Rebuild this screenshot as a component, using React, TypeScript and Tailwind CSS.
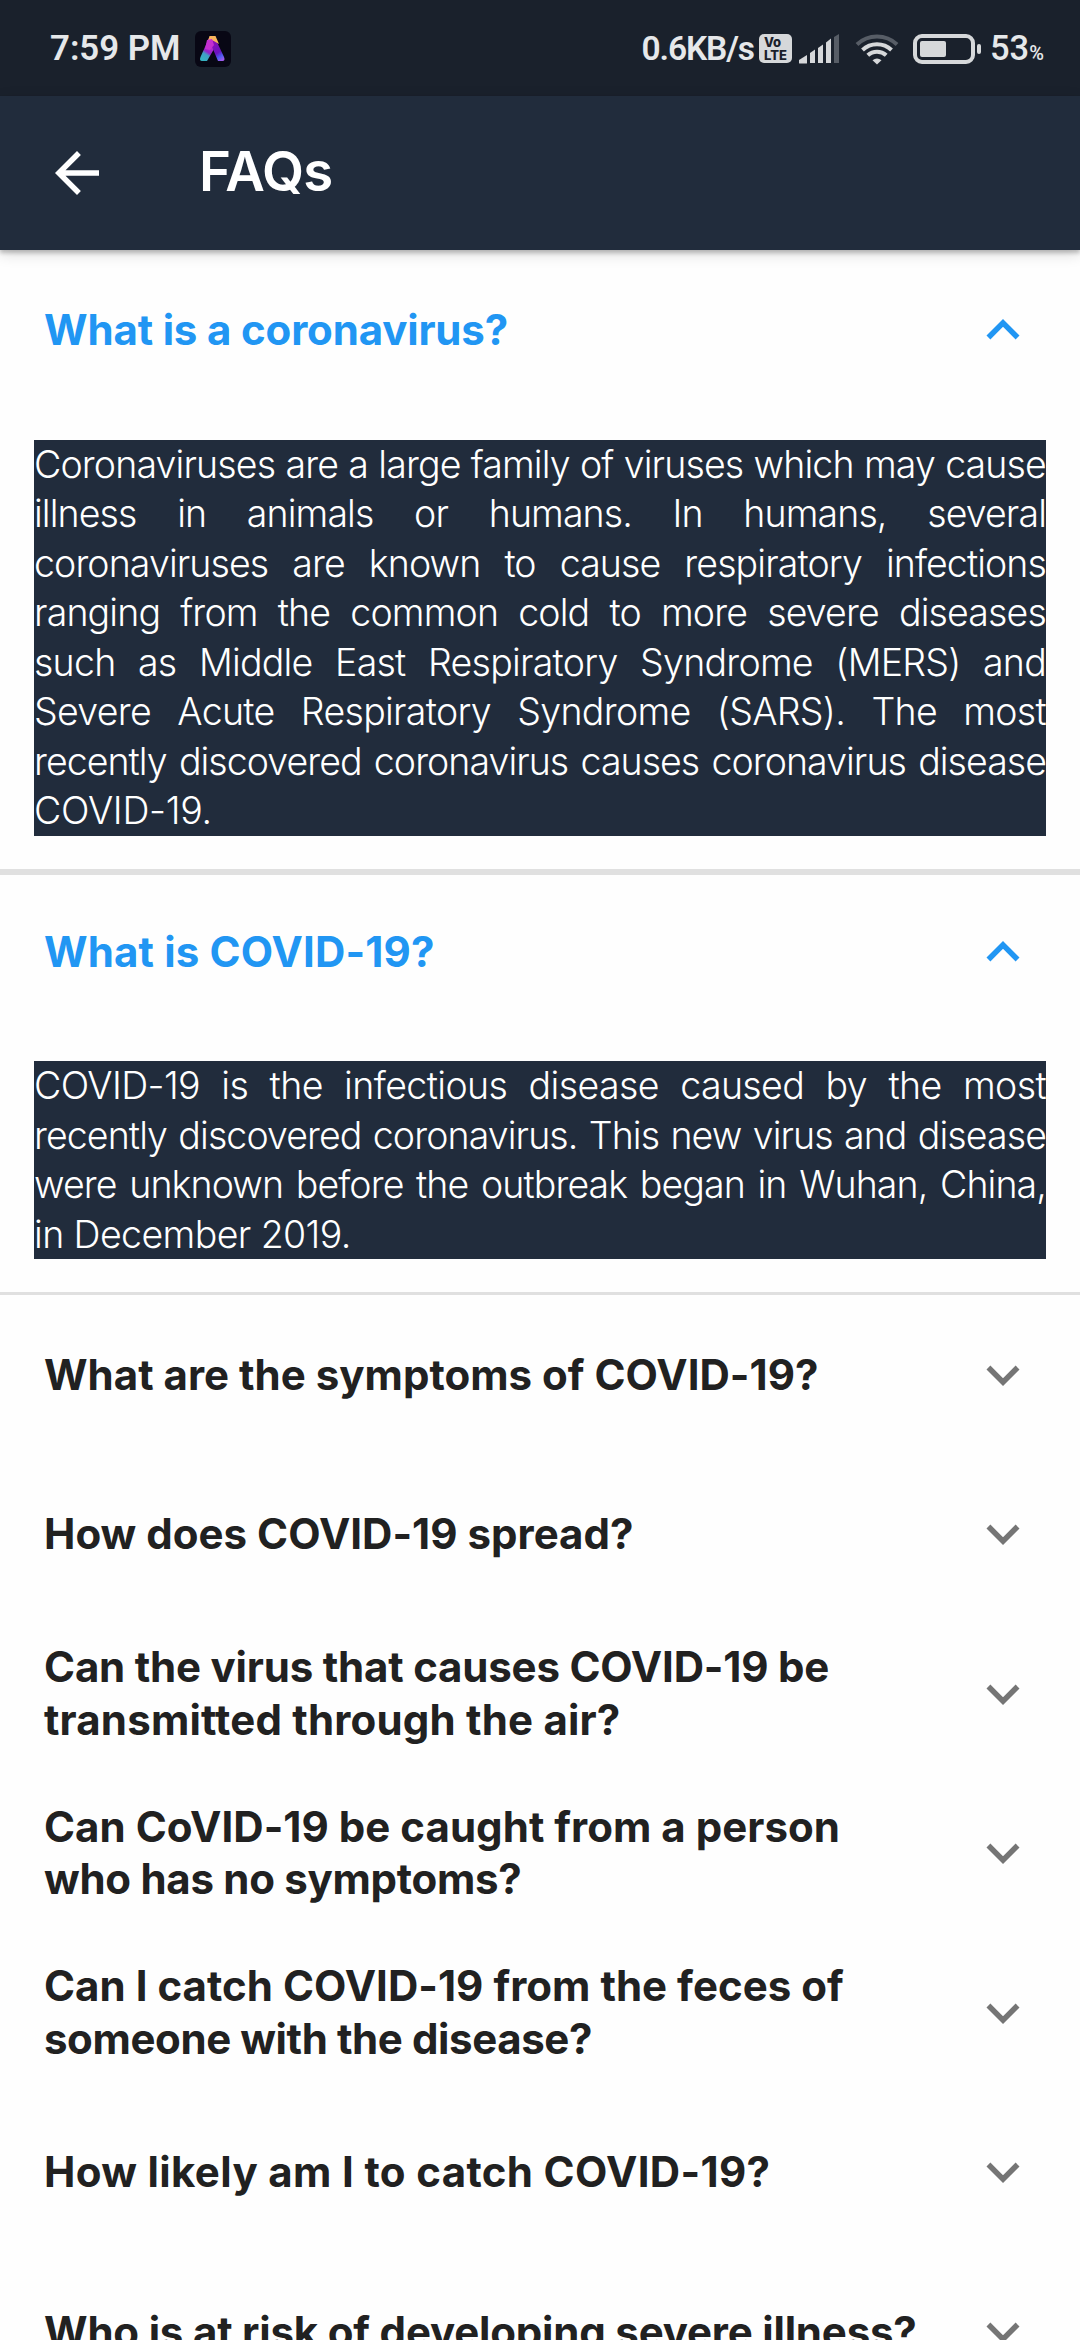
type Line = { text: string; tracking: string };

type Faq = { title: Line[]; body?: Line[] };

const faqs: Faq[] = [
  {
    title: [{ text: "What is a coronavirus?", tracking: "tracking-[-0.16px]" }],
    body: [
      { text: "Coronaviruses are a large family of viruses which may cause", tracking: "tracking-[-0.85px]" },
      { text: "illness in animals or humans. In humans, several", tracking: "tracking-[-0.9px]" },
      { text: "coronaviruses are known to cause respiratory infections", tracking: "tracking-[-0.9px]" },
      { text: "ranging from the common cold to more severe diseases", tracking: "tracking-[-0.85px]" },
      { text: "such as Middle East Respiratory Syndrome (MERS) and", tracking: "tracking-[-0.75px]" },
      { text: "Severe Acute Respiratory Syndrome (SARS). The most", tracking: "tracking-[-0.7px]" },
      { text: "recently discovered coronavirus causes coronavirus disease", tracking: "tracking-[-0.95px]" },
      { text: "COVID-19.", tracking: "tracking-[-0.3px]" },
    ],
  },
  {
    title: [{ text: "What is COVID-19?", tracking: "tracking-[0.15px]" }],
    body: [
      { text: "COVID-19 is the infectious disease caused by the most", tracking: "tracking-[-0.6px]" },
      { text: "recently discovered coronavirus. This new virus and disease", tracking: "tracking-[-0.9px]" },
      { text: "were unknown before the outbreak began in Wuhan, China,", tracking: "tracking-[-0.9px]" },
      { text: "in December 2019.", tracking: "tracking-[-0.6px]" },
    ],
  },
  { title: [{ text: "What are the symptoms of COVID-19?", tracking: "tracking-[0.02px]" }] },
  { title: [{ text: "How does COVID-19 spread?", tracking: "tracking-[0.02px]" }] },
  {
    title: [
      { text: "Can the virus that causes COVID-19 be", tracking: "tracking-[-0.19px]" },
      { text: "transmitted through the air?", tracking: "tracking-[0.19px]" },
    ],
  },
  {
    title: [
      { text: "Can CoVID-19 be caught from a person", tracking: "tracking-[0.04px]" },
      { text: "who has no symptoms?", tracking: "tracking-[-0.28px]" },
    ],
  },
  {
    title: [
      { text: "Can I catch COVID-19 from the feces of", tracking: "tracking-[0.03px]" },
      { text: "someone with the disease?", tracking: "tracking-[-0.4px]" },
    ],
  },
  { title: [{ text: "How likely am I to catch COVID-19?", tracking: "tracking-[0.35px]" }] },
  { title: [{ text: "Who is at risk of developing severe illness?", tracking: "tracking-[-0.19px]" }] },
];

function AppBadge() {
  return (
    <svg className="ml-4 size-9" viewBox="0 0 36 36">
      <defs>
        <linearGradient id="leftLeg" x1="0.7" y1="0" x2="0.2" y2="1">
          <stop offset="0.1" stopColor="#d63bd0" />
          <stop offset="0.6" stopColor="#9222c8" />
          <stop offset="0.72" stopColor="#3e9fc4" />
          <stop offset="1" stopColor="#35b3c0" />
        </linearGradient>
        <linearGradient id="rightLeg" x1="0.3" y1="0" x2="0.8" y2="1">
          <stop offset="0.1" stopColor="#8a10b8" />
          <stop offset="0.6" stopColor="#6b12c0" />
          <stop offset="0.8" stopColor="#4d5cf0" />
          <stop offset="1" stopColor="#a35cf0" />
        </linearGradient>
      </defs>
      <rect width="36" height="36" rx="6" fill="#080714" />
      <path d="M14 7h6l3 9-4 2L12 30H7q-3 0-1.500-4z" fill="url(#leftLeg)" />
      <path d="M13.500 9l8 1L29 26q1.500 4-1.500 4H23L17.500 17z" fill="url(#rightLeg)" />
      <path d="M14.500 5h6l3.500 8-7-4-4 1z" fill="#f8b45c" />
      <path d="M12 9l5-1 2 6-4 5-5-1z" fill="#c42fd0" />
    </svg>
  );
}

function VolteIcon() {
  return (
    <span className="ml-[5px] flex h-[29px] w-[33px] flex-col items-center justify-center rounded-[5px] bg-[#d6d8da] font-[Inter] text-[13px] leading-[12.5px] font-extrabold text-[#1a202b]">
      <span className="-ml-1.5">Vo</span>
      <span>LTE</span>
    </span>
  );
}

function SignalIcon() {
  return (
    <svg className="ml-[7px] h-[30px] w-[41px]" viewBox="0 0 41 30" fill="#d6d8da">
      <path d="M0 29v-3l8-5v8q0 .5-.5.500H1Q0 29.500 0 29z" />
      <path d="M11 19l5-3.500v13.500h-5z" />
      <path d="M19 14l5-3.500v18.500h-5z" />
      <path d="M27 8.500l5-4v24.500h-5z" />
      <path d="M35 3l5-3v29h-5z" fill="#575d66" />
    </svg>
  );
}

function WifiIcon() {
  return (
    <svg className="ml-[15px] h-[32px] w-[44px]" viewBox="0 0 44 32" fill="none" strokeWidth="4">
      <path d="M2 11.500a29 29 0 0 1 40 0" stroke="#575d66" />
      <path d="M7.500 17a21 21 0 0 1 29 0" stroke="#d6d8da" />
      <path d="M12.800 22.300a13.400 13.400 0 0 1 18.400 0" stroke="#d6d8da" />
      <path d="M22 31.500l-4.500-4.200q4.500-3.600 9 0z" fill="#d6d8da" />
    </svg>
  );
}

function BatteryIcon() {
  return (
    <svg className="ml-[14px] h-[30px] w-[70px]" viewBox="0 0 70 30">
      <rect x="2" y="2" width="58" height="26" rx="7" fill="none" stroke="#d6d8da" strokeWidth="4" />
      <rect x="7" y="7" width="26" height="16" rx="2" fill="#d6d8da" />
      <rect x="64" y="10" width="4" height="10" rx="2" fill="#d6d8da" />
    </svg>
  );
}

function StatusBar() {
  return (
    <div className="flex h-24 items-center bg-[#1a212c] pt-px pr-[37px] pl-[50px] font-[Roboto] font-semibold text-[#e6e8ea]">
      <span className="w-[129px] text-[34.8px] leading-none whitespace-nowrap">7:59 PM</span>
      <AppBadge />
      <div className="ml-auto flex items-center whitespace-nowrap">
        <span className="text-[33.5px] leading-none tracking-[-1.1px]">0.6KB/s</span>
        <VolteIcon />
        <SignalIcon />
        <WifiIcon />
        <BatteryIcon />
        <span className="ml-[7px] flex w-[53px] items-baseline text-[34.5px] leading-none font-medium">
          53<span className="text-[20px]">%</span>
        </span>
      </div>
    </div>
  );
}

function AppBar() {
  return (
    <header className="relative z-10 flex h-[154px] items-center bg-[#212c3c] pl-11 text-white shadow-[0_3px_4px_rgba(0,0,0,0.22),0_4px_14px_rgba(0,0,0,0.14)]">
      <svg className="size-[66px]" viewBox="0 0 24 24" fill="currentColor">
        <path d="M20 11H7.830l5.590-5.590L12 4l-8 8 8 8 1.410-1.410L7.830 13H20v-2z" />
      </svg>
      <h1 className="-mt-1 ml-[89px] text-[54.5px] leading-none font-semibold tracking-[-0.8px]">FAQs</h1>
    </header>
  );
}

function Chevron({ open }: { open: boolean }) {
  return (
    <svg className="size-[66px] shrink-0" viewBox="0 0 24 24" fill="currentColor">
      {open ? (
        <path d="M12 8l-6 6 1.410 1.410L12 10.830l4.590 4.580L18 14z" />
      ) : (
        <path d="M16.590 8.590L12 13.170 7.410 8.590 6 10l6 6 6-6z" />
      )}
    </svg>
  );
}

function FaqItem({ item, divided }: { item: Faq; divided: boolean }) {
  const open = Boolean(item.body);
  return (
    <section className={open ? "border-b-[3px] border-[#e0e0e0] text-[#2196f3]" : "text-[#757575]"}>
      <div
        className={
          divided
            ? "flex h-[159.5px] items-center justify-between border-t-[3px] border-[#e0e0e0] pr-11 pb-[2px] pl-11"
            : "flex h-[159.5px] items-center justify-between pr-11 pl-11"
        }
      >
        <h2
          className={
            open
              ? "text-[42px] leading-[52.3px] font-bold whitespace-nowrap"
              : "text-[42px] leading-[52.3px] font-bold whitespace-nowrap text-[#212121]"
          }
        >
          {item.title.map((line) => (
            <span key={line.text} className={`block ${line.tracking}`}>
              {line.text}
            </span>
          ))}
        </h2>
        <Chevron open={open} />
      </div>
      {item.body && (
        <div className="px-[34px] pt-[30px] pb-[33px]">
          <p className="bg-[#212c3c] text-[37.5px] leading-[49.5px] font-light whitespace-nowrap text-white">
            {item.body.map((line, i) => (
              <span
                key={line.text}
                className={`block ${line.tracking} ${i < item.body!.length - 1 ? "[text-align-last:justify]" : ""}`}
              >
                {line.text}
              </span>
            ))}
          </p>
        </div>
      )}
    </section>
  );
}

export default function App() {
  return (
    <div className="flex h-[2340px] w-[1080px] flex-col overflow-hidden bg-[#fefefe] font-[Inter,sans-serif]">
      <StatusBar />
      <AppBar />
      <main className="min-h-0 flex-1 overflow-hidden">
        {faqs.map((item, i) => (
          <FaqItem key={item.title[0].text} item={item} divided={i === 1} />
        ))}
      </main>
    </div>
  );
}
